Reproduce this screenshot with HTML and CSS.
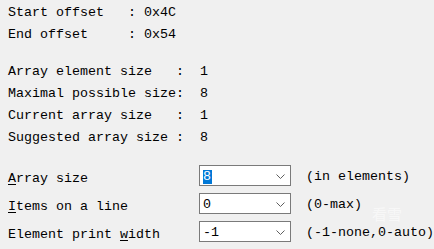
FILE: index.html
```html
<!DOCTYPE html>
<html>
<head>
<meta charset="utf-8">
<link rel="stylesheet" href="styles.css">
</head>
<body>
<div class="dlg">
  <div class="block first">
    <div class="line">Start offset   : 0x4C</div>
    <div class="line">End offset     : 0x54</div>
  </div>
  <div class="block second">
    <div class="line">Array element size   :  1</div>
    <div class="line">Maximal possible size:  8</div>
    <div class="line">Current array size   :  1</div>
    <div class="line">Suggested array size :  8</div>
  </div>
  <div class="form">
    <div class="label"><u>A</u>rray size</div>
    <div class="combo">
      <span class="val"><span class="sel">8</span></span>
      <svg class="chev" width="9" height="5" viewBox="0 0 9 5"><polyline points="0.5,0.5 4.5,4.5 8.5,0.5" fill="none" stroke="#5f5f5f" stroke-width="1"/></svg>
    </div>
    <div class="hint">(in elements)</div>

    <div class="label"><u>I</u>tems on a line</div>
    <div class="combo">
      <span class="val">0</span>
      <svg class="chev" width="9" height="5" viewBox="0 0 9 5"><polyline points="0.5,0.5 4.5,4.5 8.5,0.5" fill="none" stroke="#5f5f5f" stroke-width="1"/></svg>
    </div>
    <div class="hint">(0-max)</div>

    <div class="label">Element print <u>w</u>idth</div>
    <div class="combo">
      <span class="val">-1</span>
      <svg class="chev" width="9" height="5" viewBox="0 0 9 5"><polyline points="0.5,0.5 4.5,4.5 8.5,0.5" fill="none" stroke="#5f5f5f" stroke-width="1"/></svg>
    </div>
    <div class="hint">(-1-none,0-auto)</div>
  </div>
</div>
<div class="watermark">看雪</div>
</body>
</html>
```

FILE: styles.css
```css
html, body {
  margin: 0;
  padding: 0;
  background: #f0f0f0;
}
body {
  font-family: "Liberation Mono", "DejaVu Sans Mono", monospace;
  font-size: 13.33px;
  color: #000;
  width: 434px;
  height: 249px;
  overflow: hidden;
  position: relative;
}
.dlg {
  padding: 2px 0 0 8px;
  display: flex;
  flex-direction: column;
}
.block {
  display: flex;
  flex-direction: column;
}
.second {
  margin-top: 14.5px;
}
.line {
  white-space: pre;
  line-height: 22px;
  height: 22px;
}
.form {
  margin-top: 16.5px;
  display: grid;
  grid-template-columns: 191px 92px auto;
  grid-auto-rows: 21px;
  row-gap: 7px;
  column-gap: 0;
}
.label {
  white-space: pre;
  line-height: 21px;
  padding-top: 3px;
}
.label u {
  text-underline-offset: 2px;
}
.hint {
  white-space: pre;
  line-height: 21px;
  padding-top: 1px;
  padding-left: 15px;
}
.combo {
  box-sizing: border-box;
  height: 21px;
  border: 1px solid #7a7a7a;
  background: #fff;
  display: flex;
  align-items: center;
  padding: 0 5px 0 3px;
}
.val {
  flex: 1;
  line-height: 19px;
  padding-top: 2px;
  white-space: pre;
}
.sel {
  display: inline-block;
  background: #0078d7;
  color: #fff;
  line-height: 14px;
  height: 14px;
  padding-right: 1px;
}
.chev {
  display: block;
  margin-top: 1px;
}
.watermark {
  position: absolute;
  left: 372px;
  top: 204px;
  font-family: "Noto Sans CJK SC", sans-serif;
  font-size: 15px;
  line-height: 20px;
  color: rgba(255, 255, 255, 0.55);
  pointer-events: none;
}
```
